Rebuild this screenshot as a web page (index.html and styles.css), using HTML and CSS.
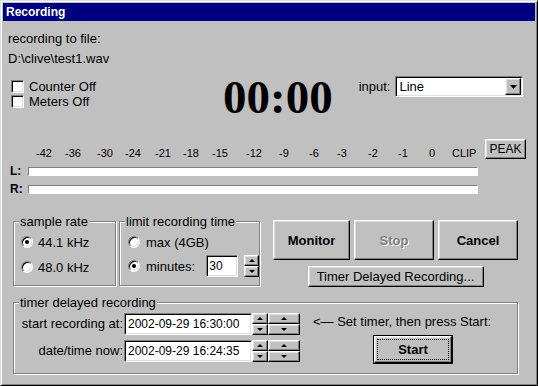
FILE: index.html
```html
<!DOCTYPE html>
<html>
<head>
<meta charset="utf-8">
<title>Recording</title>
<link rel="stylesheet" href="styles.css">
</head>
<body>
<div class="window">
  <div class="titlebar">Recording</div>
  <div class="content">
    <div class="top">
      <div class="file-info">
        <div class="line">recording to file:</div>
        <div class="line path">D:\clive\test1.wav</div>
        <div class="checks">
          <div class="check"><span class="checkbox sunken"></span><span>Counter Off</span></div>
          <div class="check"><span class="checkbox sunken"></span><span>Meters Off</span></div>
        </div>
      </div>
      <div class="counter">00:00</div>
      <div class="input-field">
        <span>input:</span>
        <div class="select sunken">
          <span class="select-value">Line</span>
          <span class="drop-btn raised"><svg class="drop-arrow" width="7" height="4" viewBox="0 0 7 4"><polygon points="0,0 7,0 3.5,4" fill="#000"/></svg></span>
        </div>
      </div>
    </div>

    <div class="meters">
      <div class="meter-main">
        <div class="scale">
          <span style="left:26px">-42</span>
          <span style="left:55px">-36</span>
          <span style="left:87px">-30</span>
          <span style="left:115px">-24</span>
          <span style="left:145px">-21</span>
          <span style="left:173px">-18</span>
          <span style="left:202px">-15</span>
          <span style="left:236px">-12</span>
          <span style="left:269px">-9</span>
          <span style="left:299px">-6</span>
          <span style="left:327px">-3</span>
          <span style="left:358px">-2</span>
          <span style="left:388px">-1</span>
          <span style="left:419px">0</span>
          <span style="left:442px">CLIP</span>
        </div>
        <div class="bar-row first"><span class="ch">L:</span><div class="bar"></div></div>
        <div class="bar-row"><span class="ch">R:</span><div class="bar"></div></div>
      </div>
      <div class="btn raised peak">PEAK</div>
    </div>

    <div class="middle">
      <div class="group sample">
        <div class="legend">sample rate</div>
        <div class="radio-row r1"><span class="radio on"></span><span>44.1 kHz</span></div>
        <div class="radio-row r2"><span class="radio"></span><span>48.0 kHz</span></div>
      </div>
      <div class="group limit">
        <div class="legend">limit recording time</div>
        <div class="radio-row r1"><span class="radio"></span><span>max (4GB)</span></div>
        <div class="radio-row r2 tall"><span class="radio on"></span><span class="minutes-label">minutes:</span>
          <div class="num-field sunken">30</div>
          <div class="spin">
            <span class="raised half"><span class="tri-up"></span></span>
            <span class="raised half"><span class="tri-down"></span></span>
          </div>
        </div>
      </div>
      <div class="actions">
        <div class="btn-row">
          <div class="btn raised big monitor">Monitor</div>
          <div class="btn raised big disabled">Stop</div>
          <div class="btn raised big">Cancel</div>
        </div>
        <div class="btn raised timer-btn">Timer Delayed Recording...</div>
      </div>
    </div>

    <div class="group timer-group">
      <div class="legend">timer delayed recording</div>
      <div class="timer-body">
        <div class="timer-fields">
          <div class="field-row row1">
            <span class="field-label">start recording at:</span>
            <div class="field sunken">2002-09-29 16:30:00</div>
            <div class="spin">
              <span class="raised half"><span class="tri-up"></span></span>
              <span class="raised half"><span class="tri-down"></span></span>
            </div>
            <div class="spin wide">
              <span class="raised half"><span class="tri-up"></span></span>
              <span class="raised half"><span class="tri-down"></span></span>
            </div>
          </div>
          <div class="field-row row2">
            <span class="field-label">date/time now:</span>
            <div class="field sunken">2002-09-29 16:24:35</div>
            <div class="spin">
              <span class="raised half"><span class="tri-up"></span></span>
              <span class="raised half"><span class="tri-down"></span></span>
            </div>
            <div class="spin wide">
              <span class="raised half"><span class="tri-up"></span></span>
              <span class="raised half"><span class="tri-down"></span></span>
            </div>
          </div>
        </div>
        <div class="timer-side">
          <div class="hint">&lt;— Set timer, then press Start:</div>
          <div class="default-frame"><div class="btn raised start">Start</div></div>
        </div>
      </div>
    </div>
  </div>
</div>
</body>
</html>
```

FILE: styles.css
```css
body {
  margin: 0;
  background: #c0c0c0;
  font-family: "Liberation Sans", Arial, sans-serif;
  font-size: 13px;
  color: #000;
}

.window {
  width: 538px;
  height: 386px;
  box-sizing: border-box;
  border: 1px solid;
  border-color: #dfdfdf #000 #000 #dfdfdf;
  box-shadow: inset 1px 1px 0 #fff, inset -1px -1px 0 #808080;
  padding: 2px;
  background: #c0c0c0;
  display: flex;
  flex-direction: column;
}

.titlebar {
  height: 18px;
  flex: none;
  background: #000080;
  color: #fff;
  font-weight: bold;
  font-size: 12px;
  line-height: 18px;
  padding-left: 3px;
}

.content {
  flex: 1;
}

/* shared 3D styles */
.sunken {
  box-sizing: border-box;
  border: 1px solid;
  border-color: #808080 #fff #fff #808080;
  box-shadow: inset 1px 1px 0 #000, inset -1px -1px 0 #dfdfdf;
  background: #fff;
}

.raised {
  box-sizing: border-box;
  border: 1px solid;
  border-color: #fff #000 #000 #fff;
  box-shadow: inset -1px -1px 0 #808080, inset 1px 1px 0 #dfdfdf;
  background: #c0c0c0;
}

.btn {
  display: flex;
  align-items: center;
  justify-content: center;
}

/* top */
.top {
  display: flex;
  height: 118px;
}

.file-info {
  flex: none;
  width: 215px;
  padding-left: 5px;
  padding-top: 10px;
}

.line {
  line-height: 15px;
}

.path {
  margin-top: 5px;
}

.checks {
  margin-top: 13px;
  padding-left: 3px;
}

.check {
  display: flex;
  align-items: center;
  gap: 5px;
  height: 15px;
}

.checkbox {
  width: 13px;
  height: 13px;
  flex: none;
}

.counter {
  flex: none;
  font-family: "Liberation Serif", "Times New Roman", serif;
  font-weight: bold;
  font-size: 47px;
  line-height: 47px;
  margin-top: 53px;
}

.input-field {
  display: flex;
  align-items: center;
  height: 21px;
  margin-left: 26px;
  margin-top: 55px;
}

.select {
  margin-left: 5px;
  width: 128px;
  height: 21px;
  padding: 1px;
  display: flex;
  align-items: center;
  justify-content: space-between;
}

.select-value {
  padding-left: 2px;
}

.drop-btn {
  width: 16px;
  height: 17px;
  display: flex;
  align-items: center;
  justify-content: center;
}

.drop-arrow {
  display: block;
}

.tri-up {
  width: 0;
  height: 0;
  border-left: 3px solid transparent;
  border-right: 3px solid transparent;
  border-bottom: 3px solid #000;
}

.tri-down {
  width: 0;
  height: 0;
  border-left: 3px solid transparent;
  border-right: 3px solid transparent;
  border-top: 3px solid #000;
}

/* meters */
.meters {
  display: flex;
  height: 59px;
  padding-left: 7px;
}

.meter-main {
  width: 475px;
  flex: none;
}

.scale {
  position: relative;
  height: 15px;
  margin-top: 7px;
  font-size: 11px;
  line-height: 15px;
}

.scale span {
  position: absolute;
  top: 0;
}

.bar-row {
  display: flex;
  align-items: center;
  height: 18px;
}

.bar-row.first {
  margin-top: 1px;
}

.ch {
  width: 18px;
  font-weight: bold;
  font-size: 12px;
}

.bar {
  width: 450px;
  height: 9px;
  box-sizing: border-box;
  background: #fff;
  border: 1px solid;
  border-color: #808080 #fff #fff #808080;
}

.peak {
  width: 41px;
  height: 20px;
  font-size: 12px;
}

/* middle */
.middle {
  display: flex;
  align-items: flex-start;
  height: 67px;
  margin-top: 22px;
  padding-left: 10px;
}

.group {
  box-sizing: border-box;
  border: 1px solid #808080;
  box-shadow: 1px 1px 0 #fff, inset 1px 1px 0 #fff;
  flex: none;
}

.legend {
  margin: -8px 0 0 5px;
  padding: 0 1px;
  background: #c0c0c0;
  width: max-content;
  line-height: 15px;
}

.sample {
  width: 103px;
  height: 65px;
  margin-top: 1px;
}

.limit {
  width: 141px;
  height: 65px;
  margin-top: 1px;
  margin-left: 3px;
}

.radio-row {
  display: flex;
  align-items: center;
  gap: 5px;
  height: 16px;
  padding-left: 7px;
}

.limit .radio-row {
  padding-left: 8px;
  gap: 6px;
}

.sample .r1,
.limit .r1 {
  margin-top: 5px;
}

.sample .r2 {
  margin-top: 9px;
}

.limit .r2 {
  margin-top: 5px;
  height: 22px;
}

.radio {
  position: relative;
  width: 12px;
  height: 12px;
  flex: none;
  box-sizing: border-box;
  border-radius: 50%;
  border: 1px solid;
  border-color: #808080 #fff #fff #808080;
  box-shadow: inset 1px 1px 0 #000, inset -1px -1px 0 #dfdfdf;
  background: #fff;
}

.radio.on::after {
  content: "";
  position: absolute;
  left: 3px;
  top: 3px;
  width: 4px;
  height: 4px;
  border-radius: 50%;
  background: #000;
}

.minutes-label {
  width: 55px;
}

.num-field {
  width: 32px;
  height: 22px;
  padding-left: 2px;
  font-size: 12px;
  line-height: 20px;
}

.spin {
  width: 15px;
  height: 22px;
  display: flex;
  flex-direction: column;
  flex: none;
}

.timer-group .spin {
  width: 16px;
}

.timer-group .spin.wide {
  width: 32px;
}

.half {
  height: 11px;
  display: flex;
  align-items: center;
  justify-content: center;
}

.actions {
  flex: none;
  width: 245px;
  margin-left: 13px;
  display: flex;
  flex-direction: column;
  align-items: center;
}

.btn-row {
  display: flex;
  gap: 4px;
}

.big {
  width: 80px;
  height: 40px;
  font-weight: bold;
}

.monitor {
  width: 77px;
}

.disabled {
  color: #808080;
  text-shadow: 1px 1px 0 #fff;
}

.timer-btn {
  width: 176px;
  height: 21px;
  margin-top: 6px;
}

/* timer delayed recording */
.timer-group {
  width: 505px;
  height: 72px;
  margin: 15px 0 0 10px;
}

.timer-body {
  display: flex;
}

.field-row {
  display: flex;
  height: 22px;
}

.row1 {
  margin-top: 3px;
}

.row2 {
  margin-top: 5px;
}

.field-label {
  width: 109px;
  padding-right: 1px;
  text-align: right;
  line-height: 22px;
}

.field {
  width: 128px;
  height: 22px;
  padding-left: 3px;
  font-size: 12px;
  line-height: 20px;
}

.timer-side {
  margin-left: 13px;
}

.hint {
  margin-top: 4px;
  line-height: 15px;
}

.default-frame {
  width: 80px;
  height: 29px;
  box-sizing: border-box;
  border: 1px solid #000;
  margin: 6px 0 0 60px;
}

.start {
  width: 100%;
  height: 100%;
  font-weight: bold;
  outline: 1px dotted #000;
  outline-offset: -4px;
}
```
